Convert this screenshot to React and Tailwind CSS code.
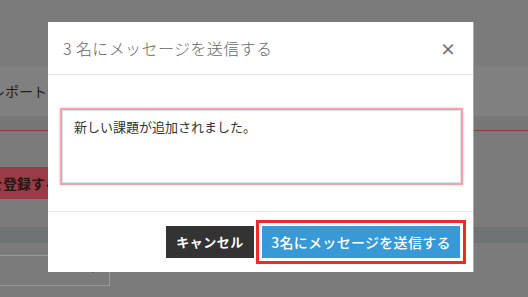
import React from 'react';

const font = { fontFamily: '"Noto Sans CJK JP", "Noto Sans", sans-serif' };

const App = () => {
  return (
    <div className="relative w-[528px] h-[297px] overflow-hidden bg-[#7b7b7b]" style={font}>
      {/* page behind the overlay */}
      <div className="flex flex-col">
        <div className="h-[66px]" />
        <div className="h-[50px] bg-[#808080] flex items-center">
          <span className="ml-[-9px] text-[14px] text-[#1e1e1e] whitespace-nowrap">レポート管理</span>
        </div>
        <div className="h-[14px] bg-[#777777]" />
        <div className="h-[1px] bg-[#8a3b3f]" />
        <div className="h-[36px]" />
        <div className="h-[32px] w-[200px] bg-[#9a3c46] flex items-center">
          <span className="ml-[-11px] text-[14px] font-bold text-[#2a1416] whitespace-nowrap">を登録する</span>
        </div>
        <div className="h-[28px]" />
        <div className="h-[16px] bg-[#6f7373]" />
        <div className="h-[12px]" />
        <div className="h-[31px] w-[110px] border border-[#999999] border-l-0 relative">
          <span className="absolute left-[90px] top-[13px] w-0 h-0 border-l-[3px] border-r-[3px] border-t-[4px] border-l-transparent border-r-transparent border-t-[#333333]" />
        </div>
      </div>

      {/* modal */}
      <div className="absolute left-[48px] top-[22px] w-[426px] h-[250px] bg-white border-r border-[#a9a9a9] flex flex-col">
        <div className="h-[53px] flex items-center justify-between pl-[15px] pr-[17px] border-b border-[#e5e5e5]">
          <h2 className="text-[16px] font-light text-[#6a6a6a] tracking-[0.4px]">3 名にメッセージを送信する</h2>
          <span className="text-[16px] leading-none font-bold text-[#707070]">×</span>
        </div>
        <div className="h-[136px] pt-[33px] px-[12px]">
          <div className="h-[77px] w-[403px] border-2 border-[#f4a3aa] shadow-[0_0_2px_#f7b7bc]">
            <div className="h-full border border-[#cfe2f3] px-[11px] pt-[6px] text-[13px] text-[#333333]">
              新しい課題が追加されました。
            </div>
          </div>
        </div>
        <div className="flex-1 border-t border-[#e5e5e5] flex justify-end items-start pt-[14px] pr-[13px] gap-[8px]">
          <button className="h-[32px] w-[88px] bg-[#333333] text-white text-[13px] font-bold tracking-[0.5px]">
            キャンセル
          </button>
          <button className="h-[32px] w-[198px] bg-[#3799d6] text-white text-[14px] font-medium tracking-[0.3px] outline-[3px] outline-solid outline-[#ee2a2a] outline-offset-[3px]">
            3名にメッセージを送信する
          </button>
        </div>
      </div>
    </div>
  );
};

export default App;
